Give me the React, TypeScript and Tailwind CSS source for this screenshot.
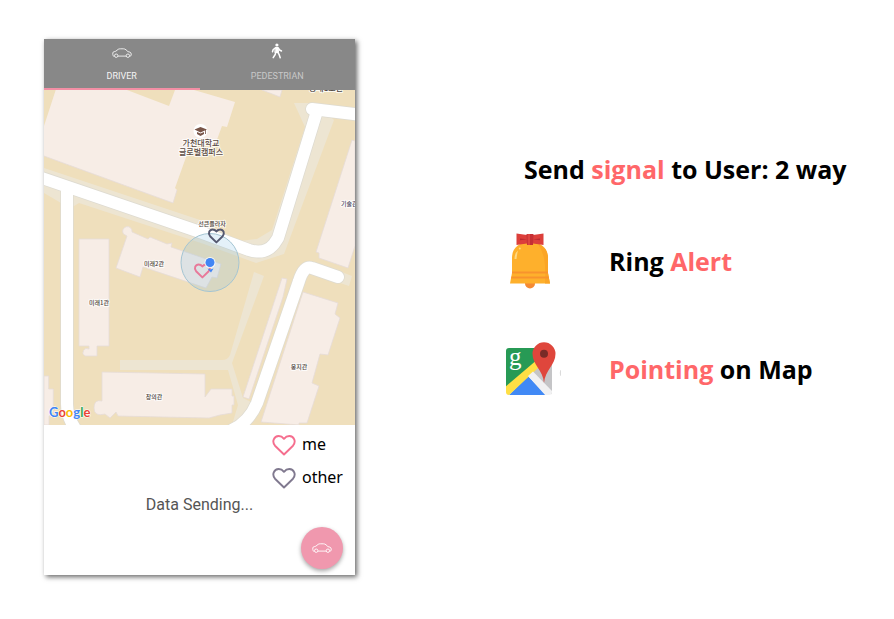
type IconProps = { className?: string };

const building = { fill: "#f7ede6", stroke: "#e6dcd8", strokeWidth: 0.8 };

function Car({ className }: IconProps) {
  return (
    <svg viewBox="0 0 20 10" className={className} fill="none" stroke="currentColor" strokeWidth="0.9" aria-hidden="true">
      <path d="M2.4 8.1H1.6Q.8 8 .8 6.600V5Q.8 3.900 2.200 3.700L3.800 3.200 6.200 1.300Q7 .8 8.300 .8H11.300Q12.900 .8 14 1.800L15.900 3.600 18 4.200Q19.200 4.700 19.200 6V7Q19.200 8 18.200 8.100H17.700M6 8.100H14" />
      <circle cx="4.200" cy="7.700" r="1.700" />
      <circle cx="15.900" cy="7.700" r="1.700" />
    </svg>
  );
}

function Walker({ className }: IconProps) {
  return (
    <svg viewBox="0 0 12 16" className={className} fill="none" stroke="currentColor" strokeLinecap="round" strokeLinejoin="round" aria-hidden="true">
      <circle cx="5.900" cy="2" r="1.600" fill="currentColor" stroke="none" />
      <path d="M4.600 4.500H7L7.600 9.500H4.200Z" fill="currentColor" strokeWidth="1" />
      <path d="M4.600 4.900 2.200 6.500 1.500 8.700M7.200 4.900 8.600 7 10.500 8M4.800 9.300 4.200 11.500 2.200 14.700M6.800 9.300 8.200 11.700 9.200 14.700" strokeWidth="1.500" />
    </svg>
  );
}

const heartPath = "M12 20.500 3 11.700C-.5 7.500 2 2 6.700 2 9.300 2 10.800 3.300 12 4.800 13.200 3.300 14.700 2 17.300 2 22 2 24.500 7.500 21 11.700Z";

function Heart({ className }: IconProps) {
  return (
    <svg viewBox="0 0 24 22" className={className} fill="none" stroke="currentColor" strokeWidth="1.900" strokeLinejoin="round" aria-hidden="true">
      <path d={heartPath} />
    </svg>
  );
}

function Bell({ className }: IconProps) {
  return (
    <svg viewBox="0 0 42 56" className={className} aria-hidden="true">
      <circle cx="21" cy="50.500" r="5" fill="#f58a32" />
      <path d="M3 40V25C3 15 10 9 21 9S39 15 39 25V40L41 50.500H1Z" fill="#feb02c" />
      <path d="M29 11Q39 15 39 25V40L41 50.500H36Q37 35 35 25 33 17 29 11" fill="#fba526" />
      <path d="M3 38.500H39V40.500H3ZM2.500 43.500H39.500L40 45.500H2Z" fill="#f8932d" />
      <path d="M5.500 26Q5.500 20 9 17.500 8 21 7.500 26Z" fill="#ffd982" />
      <circle cx="10.800" cy="15.500" r="1" fill="#ffd982" />
      <path d="M7.500 .5 18 2V10.500L7.500 12ZM34.500 .5 24 2V10.500L34.500 12Z" fill="#dc3f3b" />
      <path d="M11 5.500 18 6.300 11 7.200ZM31 5.500 24 6.300 31 7.200Z" fill="#b92b32" />
      <path d="M17.500 1H24.500L24 12H18Z" fill="#c52f34" />
      <path d="M18.500 1H21V12H18.800Z" fill="#dd4540" />
    </svg>
  );
}

function MapsLogo({ className }: IconProps) {
  return (
    <svg viewBox="0 0 56 54" className={className} aria-hidden="true">
      <defs>
        <clipPath id="tile">
          <rect x="1" y="6" width="46" height="47" rx="3" />
        </clipPath>
      </defs>
      <g clipPath="url(#tile)">
        <path d="M0 5H38V16L0 50Z" fill="#279a55" />
        <path d="M36 5H48V54L25 32Z" fill="#c5c5c7" />
        <path d="M3 54 23 34 42 54Z" fill="#4189f5" />
        <path d="M0 45 33 17V26L3 54H0Z" fill="#ffdf45" />
        <path d="M23 34 28 29.500 48 50V54H41Z" fill="#f1f1f2" />
      </g>
      <text x="4" y="23" fill="#fff" fontSize="25" className="font-['Liberation_Serif',serif] font-normal">g</text>
      <path d="M39 41C38 28 27.500 23 27.500 11.800A11.500 11.500 0 0 1 50.500 11.800C50.500 23 40 28 39 41Z" fill="#df463c" />
      <circle cx="39" cy="11.800" r="4" fill="#792b27" />
      <path d="M56 28Q54.500 31 56 34" fill="none" stroke="#ccc" strokeWidth=".8" />
    </svg>
  );
}

function CampusMap() {
  return (
    <svg viewBox="0 0 311 335" className="block h-auto w-full bg-[#efdfbc]" role="img" aria-label="Campus map">
      <rect width="311" height="335" fill="#efdfbc" />
      <g fill="#ede5d2">
        <path d="M0 78 156 130 196 151 213 149 228 140 261 37 250 13H272L290 30 240 164 212 173 160 154 35 113 30 116 17 113 0 103Z" />
        <path d="M210 182 220 186 188 273 199 308 207 312 203 335H188L194 315 184 280H76V270H178Q184 270 186 265Z" />
        <path d="M295 181 308 186 305 196 290 191Z" />
      </g>

      <g {...building}>
        <path d="M11.700 0H83L125 16 131 0H150L191 12 183 37 178 36 171 55 146 56 131 98 133 100 129 113 0 66V36Z" stroke="none" />
        <path d="M0 66 129 113 133 100" fill="none" />
        <path d="M218 0 236 7 238 0Z" />
        <path d="M35 149H65V256H53V266H41A4 4 0 1 1 45 259V256H35Z" />
        <path d="M79.500 144A4.700 4.700 0 1 1 88 142L104 149 106 147 123 154 128 153 127 157 177 174 173 188 168 187 162 198 99 177 96 187 72 178 83 146Z" />
        <path d="M0 286H4.700V299H9.300V322L5 326V335H0Z" />
        <path d="M58 282 161 284V307L167 299H188V306H190V315H188V323L176 325 165 328 74 326 72 322 66 328 61 324Q50 327 50 318T58 311Z" />
        <path d="M259 202 294 213 291 224 296 228 284 265 276 264 268 293 275 296 263 333H255V335L217 332Z" />
        <path d="M238 188 243 189 239 207 205 309 199 307Z" />
        <path d="M308 50 311 51V156L304 178 275 168V163L272 162Z" />
      </g>

      <g fill="none" strokeLinejoin="round" strokeLinecap="round">
        <g stroke="#dedbd1" strokeWidth="13.500">
          <path d="M23 98V314Q23 327 32 340M-8 86 156 142 205 160Q221 165 230 154L234 148 273 21" />
          <path d="M268 19 318 25" />
          <path d="M188 340Q205 332 213 313L255 191Q260 175 268 178L294 187" />
        </g>
        <g stroke="#fff" strokeWidth="12">
          <path d="M23 98V314Q23 327 32 340M-8 86 156 142 205 160Q221 165 230 154L234 148 273 21" />
          <path d="M268 19 318 25" />
          <path d="M188 340Q205 332 213 313L255 191Q260 175 268 178L294 187" />
        </g>
      </g>

      <circle cx="166" cy="172.500" r="29" fill="#6db6df" fillOpacity=".19" stroke="#a4c5d3" strokeWidth="1" />

      <g fill="none" strokeWidth="2.800" strokeLinejoin="round">
        <path d={heartPath} transform="translate(150 173) scale(.7)" stroke="#e8799a" />
        <path d={heartPath} transform="translate(164 138) scale(.7)" stroke="#555970" />
      </g>
      <circle cx="166" cy="172.500" r="5.500" fill="#fff" fillOpacity=".8" />
      <circle cx="166" cy="172.500" r="4.500" fill="#4285f4" />
      <path d="M163.500 178.500 166.500 179.500 169.500 178.500 167 182.500Z" fill="#4285f4" />

      <circle cx="156.500" cy="41" r="7" fill="#fff" />
      <path d="M150.500 39.500 156.500 37 163 39.500 156.500 42.500Z M153 42V44L156.500 46 160 44V42L156.500 43.500Z" fill="#795548" />
      <path d="M161.500 40V44" stroke="#795548" strokeWidth=".8" />

      <g textAnchor="middle" fill="#4d4540" stroke="#fff" strokeWidth="2" strokeOpacity=".8" strokeLinejoin="round" paintOrder="stroke" className="font-['Noto_Sans_CJK_KR',sans-serif] text-[6px] font-medium">
        <g className="text-[8px]" fill="#5b4b44">
          <text x="157" y="56">가천대학교</text>
          <text x="157" y="65">글로벌캠퍼스</text>
        </g>
        <text x="168" y="136">선큰플라자</text>
        <text x="110" y="176">미래2관</text>
        <text x="55" y="215">미래1관</text>
        <text x="110" y="309">창의관</text>
        <text x="255" y="279">웅지관</text>
        <text x="297" y="116" textAnchor="start" fill="#4c4963">기술관</text>
        <text x="282" y="1" className="text-[8px]">공대1호관</text>
      </g>

      <text x="5" y="327" stroke="#fff" strokeWidth="1" paintOrder="stroke" className="font-['Lato',sans-serif] text-[13px] font-bold">
        <tspan fill="#4285f4">G</tspan>
        <tspan fill="#ea4335">o</tspan>
        <tspan fill="#fbbc05">o</tspan>
        <tspan fill="#4285f4">g</tspan>
        <tspan fill="#34a853">l</tspan>
        <tspan fill="#ea4335">e</tspan>
      </text>
    </svg>
  );
}

export default function App() {
  return (
    <main className="grid min-h-screen grid-cols-[minmax(0,311fr)_minmax(0,495fr)] items-start bg-white px-11 pt-[39px] pb-11 text-black">
      <section className="flex flex-col bg-white shadow-[2px_2px_5px_rgba(0,0,0,0.6)]">
        <div role="tablist" className="grid grid-cols-2 bg-[#888888] font-['Roboto',sans-serif] text-[9px] leading-3">
          <button role="tab" aria-selected="true" className="flex flex-col items-center justify-between border-b-2 border-[#f28fa5] pt-1 pb-1.5 text-[#f5f5f5]">
            <span className="flex h-5 items-center">
              <Car className="h-2.5 w-5" />
            </span>
            <span>DRIVER</span>
          </button>
          <button role="tab" aria-selected="false" className="flex h-[51px] flex-col items-center justify-between border-b-2 border-[#888888] pt-1 pb-1.5 text-[#c8c8c8]">
            <Walker className="h-4 w-3 text-white" />
            <span>PEDESTRIAN</span>
          </button>
        </div>

        <CampusMap />

        <div className="flex flex-col pt-[3px] pb-1.5">
          <ul className="mr-3 flex w-[71px] flex-col self-end font-['Noto_Sans',sans-serif] text-base leading-[33px]">
            <li className="flex items-center gap-1.5">
              <Heart className="h-[22px] w-6 shrink-0 text-[#f56e8e]" />
              me
            </li>
            <li className="flex items-center gap-1.5">
              <Heart className="h-[22px] w-6 shrink-0 text-[#80798f]" />
              other
            </li>
          </ul>
          <p className="text-center font-['Roboto',sans-serif] text-base leading-[22px] text-[#555555]">Data Sending...</p>
          <button aria-label="Driver" className="mt-[11px] mr-3 flex size-[42px] items-center justify-center self-end rounded-full bg-[#f098ae] text-white shadow-[0_2px_4px_rgba(0,0,0,0.35)]">
            <Car className="h-2.5 w-5" />
          </button>
        </div>
      </section>

      <section className="pt-[110px] pl-[150px] font-['Open_Sans',sans-serif] text-[25px] leading-10 font-bold whitespace-nowrap">
        <h1 className="pl-[19px]">
          Send <span className="text-[#ff6769]">signal</span> to User: 2 way
        </h1>
        <ul className="mt-11 flex flex-col gap-[52px]">
          <li className="flex h-14 items-center">
            <span className="flex w-[104px] shrink-0 pl-1">
              <Bell className="h-14 w-[42px]" />
            </span>
            <span>
              Ring <span className="text-[#ff6769]">Alert</span>
            </span>
          </li>
          <li className="flex h-14 items-center">
            <span className="flex w-[104px] shrink-0">
              <MapsLogo className="h-[54px] w-14" />
            </span>
            <span>
              <span className="text-[#ff6769]">Pointing</span> on Map
            </span>
          </li>
        </ul>
      </section>
    </main>
  );
}
